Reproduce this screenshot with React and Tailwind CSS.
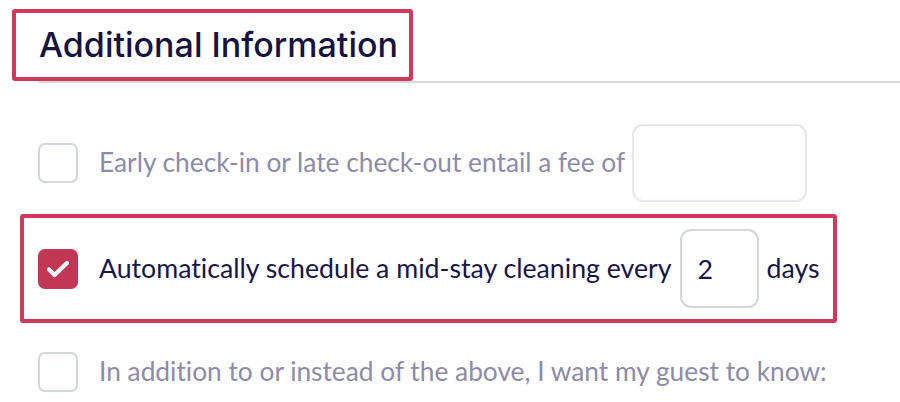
import React, { useState } from 'react';

const body = { fontFamily: 'Lato, "Noto Sans", sans-serif', fontVariantLigatures: 'none' };

function Box({ checked }) {
  if (checked) {
    return (
      <span className="flex h-[40px] w-[40px] shrink-0 items-center justify-center rounded-[7px] bg-[#c23656]">
        <svg width="24" height="20" viewBox="0 0 24 20" fill="none">
          <path
            d="M3 10.5l5.5 5.5L21 4"
            stroke="white"
            strokeWidth="4.2"
            strokeLinecap="round"
            strokeLinejoin="round"
          />
        </svg>
      </span>
    );
  }
  return <span className="h-[40px] w-[40px] shrink-0 rounded-[7px] border-2 border-[#d4d6de] bg-white" />;
}

export default function App() {
  const [days, setDays] = useState('2');

  return (
    <div className="h-[402px] w-[900px] overflow-hidden bg-white" style={body}>
      {/* heading */}
      <div className="pt-[9px]">
        <div className="ml-[12px] flex h-[72px] w-[401px] items-center rounded-[3px] border-4 border-[#d0385c] pl-[23px]">
          <h2
            className="text-[34px] font-medium leading-none text-[#16133f]"
            style={{ fontFamily: 'Inter, "Noto Sans", sans-serif' }}
          >
            Additional Information
          </h2>
        </div>
        <div className="ml-[38px] h-[2px] bg-[#d6d8de]" />
      </div>

      {/* options */}
      <div className="flex flex-col">
        <div className="mt-[41px] flex items-center pl-[38px]">
          <Box />
          <span className="ml-[21px] text-[26.3px] text-[#8d8ba7]">Early check-in or late check-out entail a fee of</span>
          <span className="ml-[7px] h-[78px] w-[175px] rounded-[11px] border-2 border-[#e6e7ee]" />
        </div>

        <div className="ml-[20px] mt-[12px] flex h-[109px] w-[817px] items-center rounded-[3px] border-4 border-[#d0385c] pl-[14px]">
          <Box checked />
          <span className="ml-[21px] text-[26.7px] text-[#18154a]">Automatically schedule a mid-stay cleaning every</span>
          <input
            value={days}
            onChange={(e) => setDays(e.target.value)}
            className="ml-[8px] h-[79px] w-[79px] rounded-[11px] border-2 border-[#d4d6de] pl-[16px] text-[26.7px] text-[#18154a] outline-none"
          />
          <span className="ml-[8px] text-[26.7px] text-[#18154a]">days</span>
        </div>

        <div className="mt-[29px] flex items-center pl-[38px]">
          <Box />
          <span className="ml-[21px] text-[26.3px] text-[#8d8ba7]">
            In addition to or instead of the above, I want my guest to know:
          </span>
        </div>
      </div>
    </div>
  );
}
